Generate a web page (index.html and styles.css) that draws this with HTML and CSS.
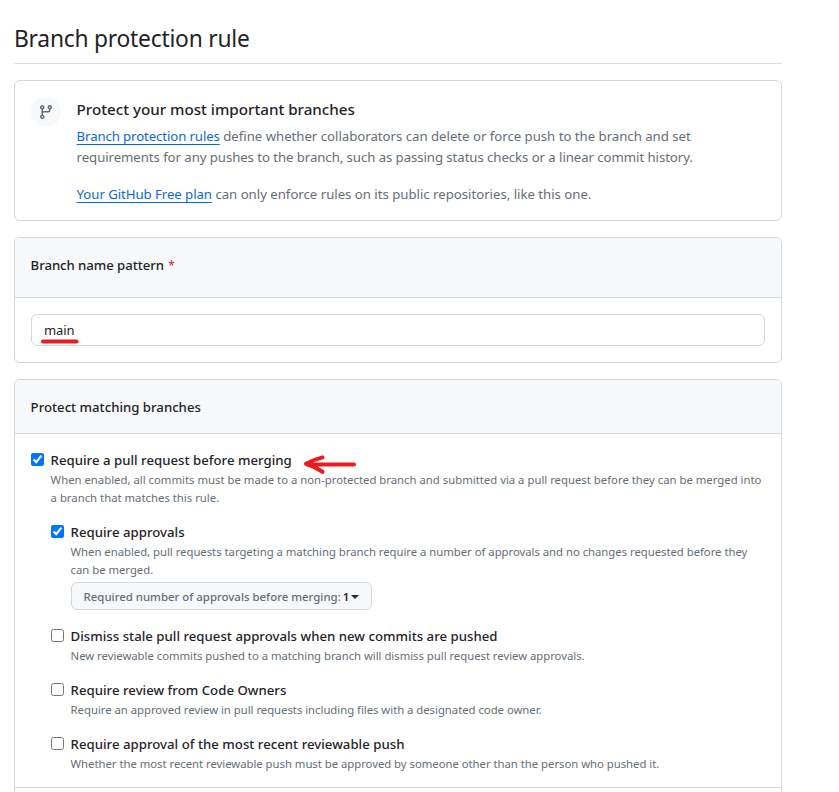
FILE: index.html
```html
<!DOCTYPE html>
<html lang="en">
<head>
<meta charset="utf-8">
<title>Branch protection rule</title>
<link rel="stylesheet" href="styles.css">
</head>
<body>
<main class="page">
  <h1 class="page-title">Branch protection rule</h1>

  <section class="box intro">
    <span class="intro-icon">
      <svg width="16" height="16" viewBox="0 0 16 16" fill="currentColor" aria-hidden="true"><path d="M9.5 3.25a2.25 2.25 0 1 1 3 2.122V6A2.5 2.5 0 0 1 10 8.5H6a1 1 0 0 0-1 1v1.128a2.251 2.251 0 1 1-1.5 0V5.372a2.25 2.25 0 1 1 1.5 0v1.836A2.493 2.493 0 0 1 6 7h4a1 1 0 0 0 1-1v-.628A2.25 2.25 0 0 1 9.5 3.25Zm-6 0a.75.75 0 1 0 1.5 0 .75.75 0 0 0-1.5 0Zm8.25-.75a.75.75 0 1 0 0 1.5.75.75 0 0 0 0-1.5ZM4.25 12a.75.75 0 1 0 0 1.5.75.75 0 0 0 0-1.5Z"/></svg>
    </span>
    <div class="intro-text">
      <h2 class="intro-title">Protect your most important branches</h2>
      <p><a class="link link-tight" href="#">Branch protection rules</a> define whether collaborators can delete or force push to the branch and set<br><span class="tight">requirements for any pushes to the branch, such as passing status checks or a linear commit history.</span></p>
      <p><a class="link" href="#">Your GitHub Free plan</a> can only enforce rules on its public repositories, like this one.</p>
    </div>
  </section>

  <section class="box">
    <header class="box-header box-header-tall"><label for="pattern">Branch name pattern <span class="required">*</span></label></header>
    <div class="box-body pattern">
      <input class="field" id="pattern" type="text" value="main">
      <svg class="mark-underline" width="40" height="8" viewBox="0 0 40 8" aria-hidden="true"><path d="M3 4.4H36.5"/></svg>
    </div>
  </section>

  <section class="box rules">
    <header class="box-header">Protect matching branches</header>
    <div class="box-body">
      <div class="rule">
        <input class="check" id="pr" type="checkbox" checked>
        <div class="rule-text">
          <label class="rule-name" for="pr">Require a pull request before merging<svg class="mark-arrow" width="56" height="22" viewBox="0 0 56 22" aria-hidden="true"><path d="M52 11.4H5M20.5 4.4Q12 6.5 4 10.7Q13 14 20.5 18.8"/></svg></label>
          <p class="note">When enabled, all commits must be made to a non-protected branch and submitted via a pull request before they can be merged into<br>a branch that matches this rule.</p>
        </div>
      </div>
      <div class="nested">
        <div class="rule">
          <input class="check" id="approvals" type="checkbox" checked>
          <div class="rule-text">
            <label class="rule-name" for="approvals">Require approvals</label>
            <p class="note">When enabled, pull requests targeting a matching branch require a number of approvals and no changes requested before they<br>can be merged.</p>
            <button class="select" type="button"><span>Required number of approvals before merging:</span><b>1</b><i class="caret"></i></button>
          </div>
        </div>
        <div class="rule">
          <input class="check" id="stale" type="checkbox">
          <div class="rule-text">
            <label class="rule-name" for="stale">Dismiss stale pull request approvals when new commits are pushed</label>
            <p class="note">New reviewable commits pushed to a matching branch will dismiss pull request review approvals.</p>
          </div>
        </div>
        <div class="rule">
          <input class="check" id="owners" type="checkbox">
          <div class="rule-text">
            <label class="rule-name" for="owners">Require review from Code Owners</label>
            <p class="note">Require an approved review in pull requests including files with a designated code owner.</p>
          </div>
        </div>
        <div class="rule">
          <input class="check" id="recent" type="checkbox">
          <div class="rule-text">
            <label class="rule-name" for="recent">Require approval of the most recent reviewable push</label>
            <p class="note">Whether the most recent reviewable push must be approved by someone other than the person who pushed it.</p>
          </div>
        </div>
      </div>
    </div>
    <div class="next-row"></div>
  </section>
</main>
</body>
</html>
```
FILE: styles.css
```css
* { box-sizing: border-box; }

body {
  margin: 0;
  height: 792px;
  overflow: hidden;
  background: #fff;
  color: #1f2328;
  font: 400 13.2px/21px "Noto Sans", sans-serif;
}

h1, h2, p { margin: 0; }

.page {
  width: 768px;
  margin-left: 14px;
  padding-top: 20px;
}

.page-title {
  height: 44px;
  margin-bottom: 16px;
  border-bottom: 1px solid #d8dee4;
  font-size: 22.8px;
  font-weight: 400;
  line-height: 38px;
  letter-spacing: -0.23px;
}

.box {
  margin-bottom: 16px;
  border: 1px solid #d0d7de;
  border-radius: 6px;
}

.intro {
  display: flex;
  gap: 15.6px;
  height: 141px;
  padding: 16px;
}

.intro-icon {
  display: flex;
  align-items: center;
  justify-content: center;
  flex: none;
  width: 30px;
  height: 30px;
  border-radius: 50%;
  background: #f6f8fa;
  color: #656d76;
}

.intro-text {
  color: #656d76;
  letter-spacing: -0.01px;
  white-space: nowrap;
}

.intro-text p + p { margin-top: 16px; }

.intro-title {
  margin-bottom: 4px;
  color: #1f2328;
  font-size: 15.2px;
  font-weight: 500;
  line-height: 25px;
}

.tight { letter-spacing: -0.06px; }

.link {
  color: #0969da;
  letter-spacing: -0.05px;
  text-decoration: underline 1px;
  text-decoration-skip-ink: none;
  text-underline-offset: 3px;
}

.link-tight { letter-spacing: -0.1px; }

.box-header {
  height: 54px;
  padding: 17px 15.6px;
  border-bottom: 1px solid #d0d7de;
  border-radius: 5px 5px 0 0;
  background: #f6f8fa;
  font-weight: 500;
}

.box-header-tall {
  height: 60px;
  letter-spacing: -0.06px;
}

.required {
  margin-left: 1px;
  color: #cf222e;
  font-size: 12px;
  font-weight: 400;
}

.box-body { padding: 16px; }

.pattern {
  position: relative;
  height: 64px;
}

.field {
  display: block;
  width: 734px;
  height: 32px;
  padding: 0 12px;
  border: 1px solid #d0d7de;
  border-radius: 6px;
  background: #fff;
  color: #1f2328;
  font: 400 13px/20px "Noto Sans", sans-serif;
  letter-spacing: -0.1px;
}

.mark-underline {
  position: absolute;
  top: 39px;
  left: 25px;
}

.mark-underline path,
.mark-arrow path {
  fill: none;
  stroke: #ea1c1f;
  stroke-width: 4;
  stroke-linecap: round;
  stroke-linejoin: round;
}

.rules {
  margin-bottom: 0;
  border-radius: 6px 6px 0 0;
}

.rules .box-body { padding-bottom: 14px; }

.rule { display: flex; }

.rule + .rule,
.nested { margin-top: 15px; }

.nested { padding-left: 20px; }

.check {
  flex: none;
  width: 13px;
  height: 13px;
  margin: 3px 6.6px 0 0;
}

.rule-text { white-space: nowrap; }

.rule-name {
  position: relative;
  display: block;
  width: max-content;
  font-weight: 500;
  letter-spacing: 0.02px;
}

.mark-arrow {
  position: absolute;
  top: 3px;
  left: 251.4px;
}

.note {
  color: #656d76;
  font-size: 11.33px;
  line-height: 18px;
}

.nested .note { letter-spacing: -0.028px; }

.select {
  display: flex;
  align-items: center;
  width: 301px;
  height: 28px;
  margin: 3px 0 1px 0.4px;
  padding: 1px 11.6px 0;
  border: 1px solid #d0d7de;
  border-radius: 6px;
  background: #f6f8fa;
  color: #656d76;
  font: 500 11.42px/20px "Noto Sans", sans-serif;
}

.select b {
  margin-left: 2px;
  color: #24292f;
  font-weight: 600;
}

.caret {
  margin-left: 2px;
  border: 4px solid transparent;
  border-top-color: #24292f;
  border-bottom: 0;
}

.next-row {
  height: 20px;
  border-top: 1px solid #d0d7de;
}
```
